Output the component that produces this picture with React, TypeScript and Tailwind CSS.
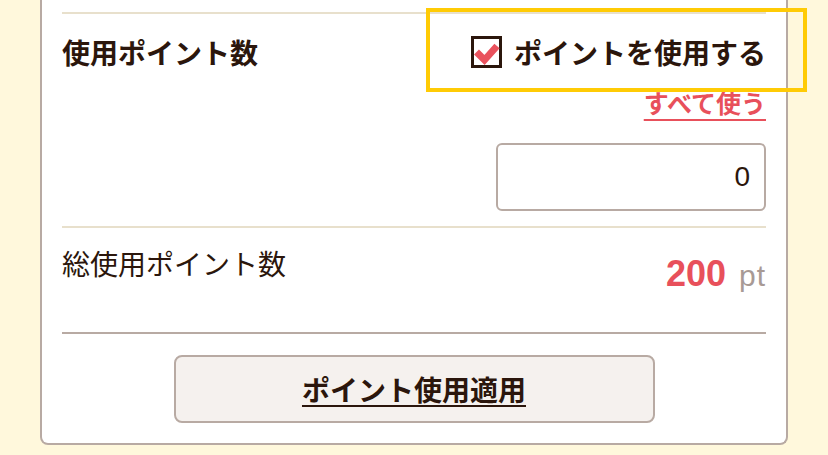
import React from "react";

export default function App() {
  return (
    <div className="relative min-h-[455px] w-[828px] bg-[#fff8dc] font-['Noto_Sans_CJK_JP',sans-serif] text-[#2b160c]">
      <div className="ml-[40px] w-[748px] rounded-b-[8px] border-x-2 border-b-2 border-[#b8aaa3] bg-white px-[20px] pt-[12px] pb-[20px]">
        {/* section 1 */}
        <div className="border-t-2 border-[#e8e0cc]">
          <div className="mt-[18px] flex items-center justify-between">
            <div className="text-[28px] font-bold leading-[40px]">使用ポイント数</div>
            <label className="flex items-center gap-[12px]">
              <span className="flex h-[32px] w-[31px] items-center justify-center border-[3px] border-[#2b160c] bg-white">
                <svg width="25" height="26" viewBox="0 0 25 26" className="overflow-visible">
                  <polyline
                    points="2.5,13 10.5,21 23,7"
                    fill="none"
                    stroke="#e9525d"
                    strokeWidth="7"
                    strokeLinejoin="miter"
                  />
                </svg>
              </span>
              <span className="text-[28px] font-bold leading-[40px]">ポイントを使用する</span>
            </label>
          </div>
          <div className="mt-[14px] flex justify-end">
            <a className="text-[25px] font-bold leading-[32px] text-[#e8505b] underline decoration-2 underline-offset-[6px]">
              すべて使う
            </a>
          </div>
          <div className="mt-[25px] mb-[15px] flex justify-end">
            <div className="flex h-[68px] w-[270px] items-center justify-end rounded-[6px] border-2 border-[#b8aaa3] pr-[14px] font-['Liberation_Sans',sans-serif] text-[28px] text-[#2b160c]">
              0
            </div>
          </div>
        </div>
        {/* section 2 */}
        <div className="flex h-[106px] items-start justify-between border-t-2 border-[#e8e0cc]">
          <div className="mt-[15px] text-[28px] leading-[40px]">総使用ポイント数</div>
          <div className="mt-[28px] flex items-baseline gap-[13px] leading-[36px]">
            <span className="font-['Liberation_Sans',sans-serif] text-[36px] font-bold text-[#e8505b]">200</span>
            <span className="font-['Liberation_Sans',sans-serif] text-[30px] text-[#a89a95] tracking-[1px]">pt</span>
          </div>
        </div>
        {/* section 3 */}
        <div className="border-t-2 border-[#b8aaa3] pt-[21px]">
          <div className="flex justify-center">
            <button className="flex h-[68px] w-[481px] items-center justify-center rounded-[8px] border-2 border-[#b8aaa3] bg-[#f5f1ee] text-[28px] font-bold leading-[40px] text-[#2b160c] underline decoration-2 underline-offset-[4px]">
              ポイント使用適用
            </button>
          </div>
        </div>
      </div>
      <div className="pointer-events-none absolute left-[426px] top-[8px] h-[84px] w-[381px] border-[4px] border-[#ffcb05]" />
    </div>
  );
}
